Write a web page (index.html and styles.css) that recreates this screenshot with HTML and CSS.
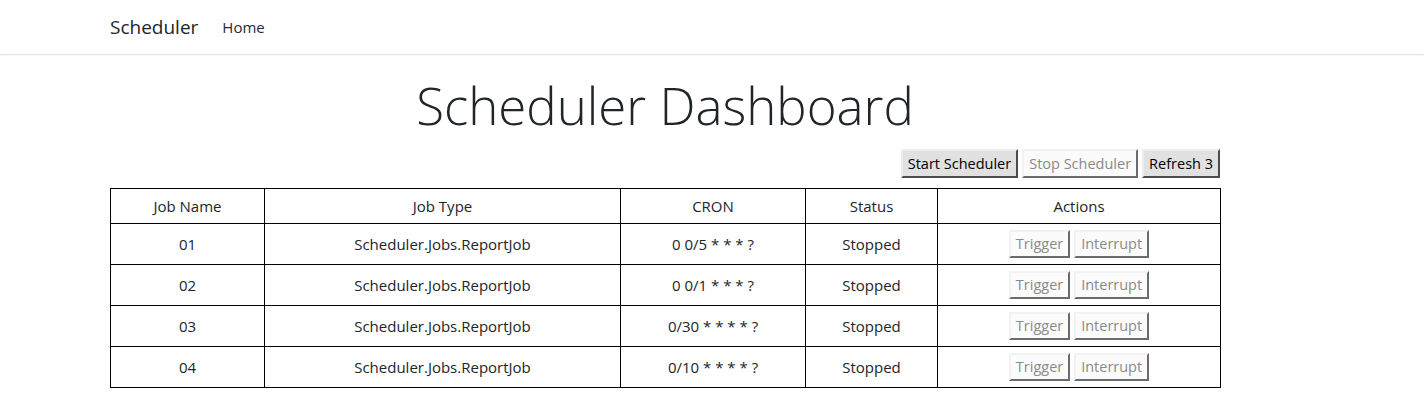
FILE: index.html
```html
<!DOCTYPE html>
<html>
<head>
<meta charset="utf-8">
<title>Scheduler</title>
<link rel="stylesheet" href="styles.css">
</head>
<body>
<header class="navbar">
  <div class="container nav-inner">
    <span class="brand">Scheduler</span>
    <a class="nav-link" href="#">Home</a>
  </div>
</header>
<main class="container">
  <h1 class="title">Scheduler Dashboard</h1>
  <div class="toolbar">
    <button class="btn">Start Scheduler</button>
    <button class="btn" disabled>Stop Scheduler</button>
    <button class="btn">Refresh 3</button>
  </div>
  <table class="jobs">
    <colgroup>
      <col class="c1"><col class="c2"><col class="c3"><col class="c4"><col class="c5">
    </colgroup>
    <thead>
      <tr><th>Job Name</th><th>Job Type</th><th>CRON</th><th>Status</th><th>Actions</th></tr>
    </thead>
    <tbody>
      <tr><td>01</td><td>Scheduler.Jobs.ReportJob</td><td>0 0/5 * * * ?</td><td>Stopped</td><td><button class="btn sm" disabled>Trigger</button> <button class="btn sm" disabled>Interrupt</button></td></tr>
      <tr><td>02</td><td>Scheduler.Jobs.ReportJob</td><td>0 0/1 * * * ?</td><td>Stopped</td><td><button class="btn sm" disabled>Trigger</button> <button class="btn sm" disabled>Interrupt</button></td></tr>
      <tr><td>03</td><td>Scheduler.Jobs.ReportJob</td><td>0/30 * * * * ?</td><td>Stopped</td><td><button class="btn sm" disabled>Trigger</button> <button class="btn sm" disabled>Interrupt</button></td></tr>
      <tr><td>04</td><td>Scheduler.Jobs.ReportJob</td><td>0/10 * * * * ?</td><td>Stopped</td><td><button class="btn sm" disabled>Trigger</button> <button class="btn sm" disabled>Interrupt</button></td></tr>
    </tbody>
  </table>
</main>
</body>
</html>
```
FILE: styles.css
```css
html, body {
  margin: 0;
  padding: 0;
  background: #fff;
  color: #212529;
  font-family: "Open Sans", "Noto Sans", sans-serif;
  font-size: 16px;
}

.container {
  width: 1110px;
  margin-left: 110px;
}

.navbar {
  height: 54px;
  border-bottom: 1px solid #e3e3e6;
  box-shadow: 0 1px 2px rgba(0,0,0,0.03);
}

.nav-inner {
  display: flex;
  align-items: center;
  height: 54px;
}

.brand {
  font-size: 19px;
  color: #212529;
  margin-right: 16px;
}

.nav-link {
  font-size: 15px;
  color: #252a36;
  text-decoration: none;
  padding: 0 8px;
}

.title {
  margin: 14px 0 0;
  text-align: center;
  font-size: 51px;
  font-weight: 300;
  line-height: 72px;
  color: #212529;
}

.toolbar {
  display: flex;
  justify-content: flex-end;
  gap: 4px;
  margin-top: 8px;
  margin-bottom: 10px;
}

.btn {
  font-family: inherit;
  font-size: 14.5px;
  color: #000;
  background: #e1e1e1;
  border: 2px outset #d8d8d8;
  border-color: #ececec #a0a0a0 #a0a0a0 #ececec;
  padding: 0 5px;
  height: 29px;
  line-height: 25px;
  margin: 0;
}

.btn:disabled {
  color: #8a8a8a;
  background: #fbfbfb;
  border-color: #f2f2f2 #bfbfbf #bfbfbf #f2f2f2;
}

.btn.sm {
  height: 28px;
  line-height: 24px;
}

.jobs {
  width: 1110px;
  border-collapse: collapse;
  table-layout: fixed;
  border: 1px solid #000;
}

.c1 { width: 154px; }
.c2 { width: 356px; }
.c3 { width: 185px; }
.c4 { width: 132px; }
.c5 { width: 283px; }

.jobs th, .jobs td {
  border: 1px solid #000;
  text-align: center;
  font-weight: 400;
  font-size: 15px;
  padding: 0;
  color: #212529;
}

.jobs th {
  height: 34px;
}

.jobs td {
  height: 40px;
}
```
